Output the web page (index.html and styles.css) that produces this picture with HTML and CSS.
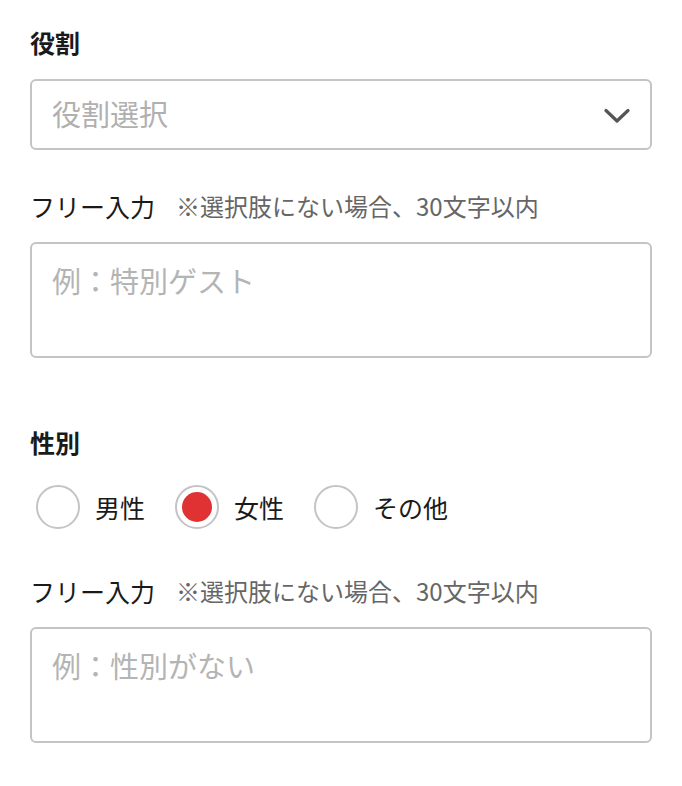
FILE: index.html
```html
<!DOCTYPE html>
<html lang="ja">
<head>
<meta charset="utf-8">
<link rel="stylesheet" href="styles.css">
</head>
<body>
<div class="form">
  <section class="group">
    <h2 class="heading">役割</h2>
    <div class="select">
      <span class="select-text">役割選択</span>
      <svg class="chevron" width="26" height="16" viewBox="0 0 26 16"><path d="M2 2.5 L13 13 L24 2.5" fill="none" stroke="#555" stroke-width="3.2" stroke-linecap="round" stroke-linejoin="round"/></svg>
    </div>
    <div class="label-row label-first"><span class="label">フリー入力</span><span class="note">※選択肢にない場合、30文字以内</span></div>
    <textarea class="textarea" placeholder="例：特別ゲスト"></textarea>
  </section>
  <section class="group group-gender">
    <h2 class="heading">性別</h2>
    <div class="radios">
      <label class="radio"><span class="circle"></span><span class="radio-text">男性</span></label>
      <label class="radio"><span class="circle checked"></span><span class="radio-text">女性</span></label>
      <label class="radio"><span class="circle"></span><span class="radio-text">その他</span></label>
    </div>
    <div class="label-row label-second"><span class="label">フリー入力</span><span class="note">※選択肢にない場合、30文字以内</span></div>
    <textarea class="textarea" placeholder="例：性別がない"></textarea>
  </section>
</div>
</body>
</html>
```
FILE: styles.css
```css
* { box-sizing: border-box; }
html, body { margin: 0; padding: 0; background: #fff; }
body {
  font-family: "Noto Sans CJK JP", "Noto Sans", sans-serif;
  color: #222;
}
.form { padding: 26px 30px 0 30px; }
.heading {
  margin: 0;
  font-size: 25px;
  line-height: 32px;
  height: 32px;
  font-weight: 700;
  color: #1a1a1a;
}
.select {
  margin-top: 21px;
  height: 71px;
  border: 2px solid #c4c4c4;
  border-radius: 6px;
  display: flex;
  align-items: center;
  justify-content: space-between;
  padding: 0 20px 0 20px;
}
.select-text {
  font-size: 29px;
  color: #b0b0b0;
  line-height: 1;
  margin-top: -2px;
}
.chevron { display: block; margin-top: 2px; }
.label-row {
  display: flex;
  align-items: center;
  height: 32px;
  line-height: 32px;
}
.label-first { margin-top: 40px; }
.label-second { margin-top: 46px; }
.label { font-size: 25px; color: #1a1a1a; }
.note { font-size: 24px; color: #666; margin-left: 21px; }
.textarea {
  display: block;
  width: 100%;
  margin-top: 20px;
  height: 116px;
  border: 2px solid #c4c4c4;
  border-radius: 6px;
  padding: 17px 20px;
  font-family: "Noto Sans CJK JP", "Noto Sans", sans-serif;
  font-size: 29px;
  line-height: 38px;
  resize: none;
  outline: none;
  background: #fff;
}
.textarea::placeholder { color: #b4b4b4; }
.group-gender { margin-top: 68px; }
.radios {
  margin-top: 27px;
  display: flex;
  align-items: center;
  padding-left: 6px;
}
.radio {
  display: flex;
  align-items: center;
  margin-right: 30px;
}
.circle {
  width: 44px;
  height: 44px;
  border: 2px solid #c4c4c4;
  border-radius: 50%;
  display: flex;
  align-items: center;
  justify-content: center;
}
.circle.checked::after {
  content: "";
  width: 30px;
  height: 30px;
  border-radius: 50%;
  background: #e03232;
}
.radio-text {
  margin-left: 15px;
  font-size: 25px;
  color: #1a1a1a;
  line-height: 32px;
}
```
